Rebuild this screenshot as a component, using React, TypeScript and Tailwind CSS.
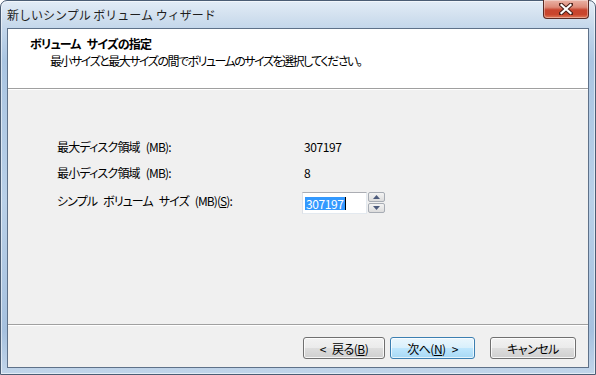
import React from "react";

function Sp() {
  return <span className="inline-block w-[6px]" />;
}

function Btn({
  children,
  w,
  focused,
}: {
  children: React.ReactNode;
  w: string;
  focused?: boolean;
}) {
  return (
    <div
      className={
        "h-[22px] rounded-[3px] border flex items-center justify-center text-[12px] leading-[15px] tracking-[-0.5px] text-black " +
        w +
        (focused
          ? " border-[#3c7fb1] bg-[linear-gradient(to_bottom,#eaf6fd_0%,#d9f0fc_48%,#bee6fd_52%,#a7d9f5_100%)] shadow-[inset_0_0_0_1px_rgba(255,255,255,0.7)]"
          : " border-[#707070] bg-[linear-gradient(to_bottom,#f2f2f2_0%,#ebebeb_48%,#dddddd_52%,#cfcfcf_100%)] shadow-[inset_0_0_0_1px_rgba(255,255,255,0.8)]")
      }
    >
      {children}
    </div>
  );
}

function Spin() {
  const half =
    "h-[10px] w-[17px] border border-[#a7acb4] rounded-[2px] bg-[linear-gradient(to_bottom,#f4f4f4,#dcdcdc)] flex items-center justify-center";
  return (
    <div className="flex flex-col gap-[1px] ml-[1px]">
      <div className={half}>
        <svg width="7" height="4" viewBox="0 0 7 4">
          <path d="M0 4 L3.5 0 L7 4 Z" fill="#4d5b7c" />
        </svg>
      </div>
      <div className={half}>
        <svg width="7" height="4" viewBox="0 0 7 4">
          <path d="M0 0 L3.5 4 L7 0 Z" fill="#4d5b7c" />
        </svg>
      </div>
    </div>
  );
}

export default function App() {
  return (
    <div className="w-[596px] h-[375px] font-['Noto_Sans_CJK_JP','Noto_Sans',sans-serif] [font-feature-settings:'palt'] text-black">
      <div className="relative w-[596px] h-[375px] rounded-t-[7px] border border-[#4b5d74] bg-[linear-gradient(to_bottom,#e2ecf6_0px,#d3e1ef_14px,#c4d7eb_27px,#aac5e2_60px,#b9d0e8_200px,#a6c1df_330px,#c3d6ea_375px)] shadow-[inset_0_0_0_1px_rgba(255,255,255,0.55)] pt-[27px] px-[6px] pb-[6px] flex flex-col">
        {/* title text */}
        <div className="absolute left-[6px] top-[5px] text-[12px] leading-[18px] text-[#1e1e1e] [font-feature-settings:normal]">
          新しいシンプル ボリューム ウィザード
        </div>
        {/* close button */}
        <div className="absolute right-[6px] top-[-1px] w-[46px] h-[19px] rounded-b-[4px] border border-[#5a2a24] border-t-0 bg-[linear-gradient(to_bottom,#eab3a6_0%,#dd8a78_40%,#c8452f_55%,#c9452c_80%,#e07a5a_100%)] shadow-[inset_0_0_0_1px_rgba(255,255,255,0.35)] flex items-center justify-center">
          <svg width="14" height="12" viewBox="0 0 14 12">
            <path
              d="M2 1.5 L12 10.5 M12 1.5 L2 10.5"
              stroke="#4a2019"
              strokeWidth="4.2"
              strokeLinecap="square"
            />
            <path
              d="M2.5 2 L11.5 10 M11.5 2 L2.5 10"
              stroke="#ffffff"
              strokeWidth="2.2"
              strokeLinecap="square"
            />
          </svg>
        </div>

        {/* client */}
        <div className="flex-1 border border-[#5e7189] bg-[#f0f0f0] flex flex-col">
          {/* header */}
          <div className="h-[59px] bg-white pl-[22px] pt-[6px]">
            <div className="text-[12px] leading-[17px] font-bold tracking-[-0.8px]">
              ボリューム<Sp />サイズの指定
            </div>
            <div className="text-[12px] leading-[17px] pl-[20px] tracking-[-1.5px]">
              最小サイズと最大サイズの間でボリュームのサイズを選択してください。
            </div>
          </div>
          <div className="h-[1px] bg-[#a0a0a0]" />
          <div className="h-[1px] bg-white" />

          {/* body */}
          <div className="h-[234px] pl-[49px] pt-[46px] text-[12px] leading-[15px]">
            <div className="flex h-[20px] items-center">
              <div className="w-[245px] tracking-[-0.8px]">
                最大ディスク領域<Sp />(MB):
              </div>
              <div className="pl-[2px] tracking-[-0.4px]">307197</div>
            </div>
            <div className="flex h-[20px] items-center mt-[6px]">
              <div className="w-[245px] tracking-[-0.8px]">
                最小ディスク領域<Sp />(MB):
              </div>
              <div className="pl-[2px]">8</div>
            </div>
            <div className="flex h-[22px] items-start mt-[10px]">
              <div className="w-[245px] pt-[1px] tracking-[-0.9px]">
                シンプル<Sp />ボリューム<Sp />サイズ<Sp />(MB)(<span className="underline">S</span>):
              </div>
              <div className="flex">
                <div className="w-[65px] h-[22px] bg-white border border-[#e3e9ef] border-t-[#abadb3] border-l-[#dbdfe6] flex items-center pl-[2px]">
                  <span className="bg-[#3399ff] text-white leading-[13px] px-[1px] tracking-[-0.4px]">
                    307197
                  </span>
                  <span className="w-[1px] h-[13px] bg-black" />
                </div>
                <Spin />
              </div>
            </div>
          </div>

          <div className="h-[1px] bg-[#a0a0a0]" />
          <div className="h-[1px] bg-white" />

          {/* footer */}
          <div className="flex-1 flex justify-end pt-[11px] pr-[12px]">
            <Btn w="w-[82px]">
              &lt;<Sp />戻る(<span className="underline">B</span>)
            </Btn>
            <div className="w-[5px]" />
            <Btn w="w-[85px]" focused>
              次へ(<span className="underline">N</span>)<Sp />&gt;
            </Btn>
            <div className="w-[15px]" />
            <Btn w="w-[86px]">キャンセル</Btn>
          </div>
        </div>
      </div>
    </div>
  );
}
